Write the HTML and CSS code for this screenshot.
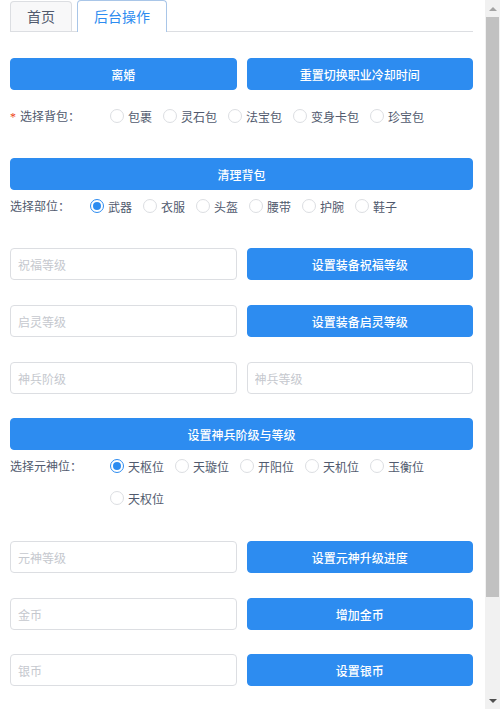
FILE: index.html
```html
<!DOCTYPE html>
<html lang="zh">
<head>
<meta charset="utf-8">
<title>后台操作</title>
<link rel="stylesheet" href="styles.css">
</head>
<body>
<div class="page">
  <div class="tabs">
    <div class="tab">首页</div>
    <div class="tab active">后台操作</div>
  </div>

  <div class="row2 r-first">
    <button class="btn">离婚</button>
    <button class="btn">重置切换职业冷却时间</button>
  </div>

  <div class="radio-row r-bag">
    <span class="lbl w100"><span class="req">*</span>选择背包：</span>
    <div class="group">
      <label class="radio"><span class="dot"></span>包裹</label>
      <label class="radio"><span class="dot"></span>灵石包</label>
      <label class="radio"><span class="dot"></span>法宝包</label>
      <label class="radio"><span class="dot"></span>变身卡包</label>
      <label class="radio"><span class="dot"></span>珍宝包</label>
    </div>
  </div>

  <div class="row1 r-clean">
    <button class="btn">清理背包</button>
  </div>

  <div class="radio-row">
    <span class="lbl w80">选择部位：</span>
    <div class="group">
      <label class="radio"><span class="dot on"></span>武器</label>
      <label class="radio"><span class="dot"></span>衣服</label>
      <label class="radio"><span class="dot"></span>头盔</label>
      <label class="radio"><span class="dot"></span>腰带</label>
      <label class="radio"><span class="dot"></span>护腕</label>
      <label class="radio"><span class="dot"></span>鞋子</label>
    </div>
  </div>

  <div class="row2 r-bless">
    <input class="inp" placeholder="祝福等级">
    <button class="btn">设置装备祝福等级</button>
  </div>

  <div class="row2 r-std">
    <input class="inp" placeholder="启灵等级">
    <button class="btn">设置装备启灵等级</button>
  </div>

  <div class="row2 r-std">
    <input class="inp" placeholder="神兵阶级">
    <input class="inp" placeholder="神兵等级">
  </div>

  <div class="row1 r-shenbing">
    <button class="btn">设置神兵阶级与等级</button>
  </div>

  <div class="radio-row">
    <span class="lbl w100">选择元神位：</span>
    <div class="group">
      <label class="radio"><span class="dot on"></span>天枢位</label>
      <label class="radio"><span class="dot"></span>天璇位</label>
      <label class="radio"><span class="dot"></span>开阳位</label>
      <label class="radio"><span class="dot"></span>天机位</label>
      <label class="radio"><span class="dot"></span>玉衡位</label>
      <label class="radio"><span class="dot"></span>天权位</label>
    </div>
  </div>

  <div class="row2 r-yuanshen">
    <input class="inp" placeholder="元神等级">
    <button class="btn">设置元神升级进度</button>
  </div>

  <div class="row2 r-std">
    <input class="inp" placeholder="金币">
    <button class="btn">增加金币</button>
  </div>

  <div class="row2 r-silver">
    <input class="inp" placeholder="银币">
    <button class="btn">设置银币</button>
  </div>
</div>

<div class="scrollbar" aria-hidden="true">
  <div class="arrow up"></div>
  <div class="track">
    <div class="thumb"></div>
  </div>
  <div class="arrow down"></div>
</div>
</body>
</html>
```

FILE: styles.css
```css
html, body {
  margin: 0;
  padding: 0;
  background: #fff;
}

body {
  font-family: "Noto Sans CJK SC", "Noto Sans", sans-serif;
  font-size: 12px;
  color: #515a6e;
}

.page {
  margin-right: 15px;
  padding: 0 12px 140px 10px;
}

.tabs {
  display: flex;
  align-items: flex-end;
  gap: 5px;
  height: 31px;
  border-bottom: 1px solid #dcdee2;
}

.tab {
  box-sizing: border-box;
  height: 30px;
  padding: 0 16px;
  line-height: 29px;
  font-size: 14px;
  color: #515a6e;
  background: #f8f8f9;
  border: 1px solid #dcdee2;
  border-bottom: 0;
  border-radius: 4px 4px 0 0;
}

.tab.active {
  height: 32px;
  line-height: 30px;
  margin-bottom: -1px;
  background: #fff;
  color: #2d8cf0;
  border-color: #a9c6e8;
}

.row2 {
  display: grid;
  grid-template-columns: 1fr 1fr;
  column-gap: 10px;
}

.row1 {
  display: flex;
}

.r-first { margin-top: 26px; }
.r-clean { margin-top: 25px; }
.r-bless { margin-top: 26px; }
.r-std { margin-top: 25px; }
.r-shenbing { margin-top: 24px; }
.r-yuanshen { margin-top: 27px; }
.r-silver { margin-top: 24px; }
.r-bag { margin-top: 10px; }

.btn {
  flex: 1;
  height: 32px;
  margin: 0;
  padding: 0 15px;
  border: 1px solid #2d8cf0;
  border-radius: 4px;
  background: #2d8cf0;
  color: #fff;
  font-family: "Noto Sans CJK SC", "Noto Sans", sans-serif;
  font-size: 12px;
  font-weight: 500;
}

.inp {
  box-sizing: border-box;
  width: 100%;
  height: 32px;
  margin: 0;
  padding: 4px 7px;
  border: 1px solid #dcdee2;
  border-radius: 4px;
  background: #fff;
  font-family: "Noto Sans CJK SC", "Noto Sans", sans-serif;
  font-size: 12px;
  color: #515a6e;
  outline: none;
}

.inp::placeholder {
  color: #c5c8ce;
}

.radio-row {
  display: flex;
  align-items: flex-start;
}

.lbl {
  flex: none;
  line-height: 32px;
  color: #515a6e;
}

.w100 { width: 100px; }
.w80 { width: 80px; }

.req {
  display: inline-block;
  width: 6px;
  margin-right: 4px;
  color: #ed4014;
  font-family: "Liberation Serif", serif;
}

.group {
  flex: 1;
  display: flex;
  flex-wrap: wrap;
}

.radio {
  display: inline-flex;
  align-items: center;
  height: 32px;
  margin-right: 11px;
  color: #515a6e;
}

.dot {
  box-sizing: border-box;
  position: relative;
  width: 14px;
  height: 14px;
  margin-right: 4px;
  border: 1px solid #dcdee2;
  border-radius: 50%;
  background: #fff;
}

.dot.on {
  border-color: #2d8cf0;
}

.dot.on::after {
  content: "";
  position: absolute;
  left: 2px;
  top: 2px;
  width: 8px;
  height: 8px;
  border-radius: 50%;
  background: #2d8cf0;
}

/* classic scrollbar drawn over the right edge of the window */
.scrollbar {
  position: fixed;
  top: 0;
  right: 0;
  bottom: 0;
  width: 15px;
  display: flex;
  flex-direction: column;
  background: #f1f1f1;
}

.arrow {
  flex: none;
  height: 17px;
  display: flex;
  align-items: center;
  justify-content: center;
}

.arrow::before {
  content: "";
  width: 0;
  height: 0;
  border-left: 4px solid transparent;
  border-right: 4px solid transparent;
}

.arrow.up::before {
  border-bottom: 4px solid #a3a3a3;
}

.arrow.down::before {
  border-top: 4px solid #505050;
}

.track {
  flex: 1;
  display: flex;
  flex-direction: column;
}

.thumb {
  height: 580px;
  margin: 0 1px;
  background: #c1c1c1;
}
```
